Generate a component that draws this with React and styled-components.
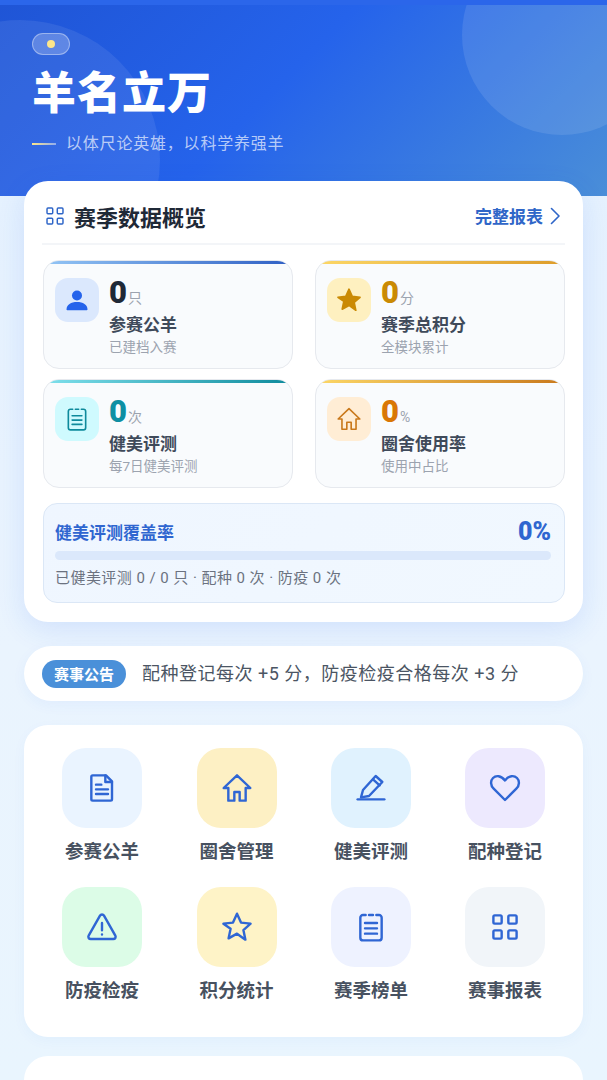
import React from "react"
import styled, { createGlobalStyle } from "styled-components"

const GlobalStyle = createGlobalStyle`
  html, body {
    margin: 0;
    padding: 0;
    height: 100%;
    overflow: hidden;
    background: #e9f4fe;
    font-family: "Roboto", "Noto Sans CJK SC", "Noto Sans", sans-serif;
  }
  * {
    box-sizing: border-box;
  }
`

const Page = styled.div`
  width: 607px;
  height: 1080px;
  overflow: hidden;
  background: linear-gradient(180deg, #e3f0fe 0%, #eaf4fe 60%, #e9f5fe 100%);
`

const Hero = styled.header`
  position: relative;
  height: 196px;
  padding: 33px 32px 0;
  overflow: hidden;
  background: linear-gradient(135deg, #1f55d6 0%, #2563eb 45%, #4a8ed8 100%);
  border-top: 5px solid #2b66ea;
`

const HeroCircle = styled.div`
  position: absolute;
  border-radius: 50%;
  background: rgba(255, 255, 255, ${(p) => p.$alpha});
  width: ${(p) => p.$size}px;
  height: ${(p) => p.$size}px;
  left: ${(p) => p.$left}px;
  top: ${(p) => p.$top}px;
`

const Chip = styled.div`
  position: relative;
  width: 38px;
  height: 22px;
  margin-top: -5px;
  border-radius: 11px;
  border: 1px solid rgba(255, 255, 255, 0.38);
  background: rgba(255, 255, 255, 0.22);
  display: flex;
  align-items: center;
  justify-content: center;
`

const ChipDot = styled.span`
  width: 8px;
  height: 8px;
  border-radius: 50%;
  background: #fde68a;
`

const HeroTitle = styled.h1`
  position: relative;
  margin: 11px 0 0;
  font-size: 44px;
  line-height: 56px;
  font-weight: 900;
  letter-spacing: 1px;
  color: #fff;
`

const HeroSub = styled.div`
  position: relative;
  margin-top: 10px;
  display: flex;
  align-items: center;
  gap: 10px;
  font-size: 16px;
  line-height: 24px;
  letter-spacing: 0.8px;
  color: rgba(255, 255, 255, 0.68);
`

const SubLine = styled.span`
  width: 24px;
  height: 2px;
  background: linear-gradient(90deg, #fde68a, rgba(255, 255, 255, 0.45));
`

const Content = styled.main`
  position: relative;
  margin-top: -15px;
  padding: 0 24px;
  display: flex;
  flex-direction: column;
`

const OverviewCard = styled.section`
  height: 441px;
  padding: 0 18px;
  background: #fff;
  border-radius: 24px;
  box-shadow: 0 8px 28px rgba(37, 99, 235, 0.12);
`

const CardHead = styled.div`
  height: 64px;
  padding: 7px 5px 0 0;
  display: flex;
  align-items: center;
  justify-content: space-between;
  border-bottom: 2px solid #f3f5f8;
`

const HeadTitle = styled.h2`
  margin: 0;
  display: flex;
  align-items: center;
  gap: 8px;
  padding-left: 2px;
  font-size: 22px;
  font-weight: 700;
  color: #1f2937;
`

const HeadLink = styled.div`
  display: flex;
  align-items: center;
  gap: 7px;
  font-size: 17px;
  font-weight: 700;
  color: #2f66c8;
`

const StatGrid = styled.div`
  margin: 15px 0 0 1px;
  display: grid;
  grid-template-columns: 250px 250px;
  column-gap: 22px;
  row-gap: 10px;
`

const StatCard = styled.div`
  height: 109px;
  border: 1px solid #e6e9ee;
  border-radius: 16px;
  background: #f9fbfd;
  overflow: hidden;
`

const StatBar = styled.div`
  height: 4px;
  margin: -1px 0 0;
  background: linear-gradient(90deg, ${(p) => p.$from}, ${(p) => p.$to});
`

const StatBody = styled.div`
  padding: 14px 11px 0;
  display: flex;
  gap: 10px;
`

const StatIcon = styled.div`
  width: 44px;
  height: 44px;
  flex: none;
  border-radius: 13px;
  display: flex;
  align-items: center;
  justify-content: center;
  background: ${(p) => p.$bg};
`

const StatInfo = styled.div`
  display: flex;
  flex-direction: column;
`

const StatValueRow = styled.div`
  display: flex;
  align-items: baseline;
  gap: 1px;
  height: 32px;
  margin-top: -1px;
`

const StatValue = styled.span`
  font-size: 31px;
  line-height: 32px;
  font-weight: 900;
  color: ${(p) => p.$color};
`

const StatUnit = styled.span`
  font-size: 14px;
  color: #9ca3af;
`

const StatLabel = styled.div`
  margin-top: 4px;
  font-size: 17px;
  line-height: 24px;
  font-weight: 700;
  color: #3f4a5a;
`

const StatHint = styled.div`
  margin-top: 1px;
  font-size: 13.5px;
  line-height: 18px;
  color: #9ca3af;
`

const Coverage = styled.div`
  margin: 15px 0 0 1px;
  height: 100px;
  padding: 11px 13px 0 11px;
  border: 1px solid #dbe7f6;
  border-radius: 14px;
  background: linear-gradient(135deg, #eff6ff, #f1f8ff);
`

const CoverageHead = styled.div`
  display: flex;
  align-items: center;
  justify-content: space-between;
  height: 32px;
`

const CoverageTitle = styled.span`
  font-size: 17px;
  font-weight: 700;
  color: #2f66d0;
`

const CoveragePct = styled.span`
  font-size: 25px;
  font-weight: 900;
  color: #2f66d0;
`

const Track = styled.div`
  margin-top: 4px;
  height: 9px;
  border-radius: 5px;
  background: #dbe8fb;
`

const CoverageNote = styled.div`
  margin-top: 8px;
  font-size: 15px;
  line-height: 20px;
  letter-spacing: 0.45px;
  color: #6b7280;
`

const Notice = styled.div`
  margin-top: 24px;
  height: 55px;
  padding: 0 18px;
  border-radius: 28px;
  background: #fff;
  display: flex;
  align-items: center;
  gap: 16px;
  box-shadow: 0 4px 14px rgba(37, 99, 235, 0.05);
`

const NoticeTag = styled.span`
  width: 84px;
  height: 28px;
  border-radius: 14px;
  background: #4a90d9;
  color: #fff;
  font-size: 15px;
  font-weight: 700;
  display: flex;
  align-items: center;
  justify-content: center;
`

const NoticeText = styled.span`
  padding-bottom: 3px;
  font-size: 18px;
  letter-spacing: 0.5px;
  color: #4b5563;
`

const MenuCard = styled.nav`
  margin-top: 24px;
  height: 312px;
  padding: 23px 11px 0;
  border-radius: 24px;
  background: #fff;
  display: grid;
  grid-template-columns: 134px 135px 134px 134px;
  grid-auto-rows: 139px;
  box-shadow: 0 4px 14px rgba(37, 99, 235, 0.04);
`

const MenuItem = styled.div`
  display: flex;
  flex-direction: column;
  align-items: center;
`

const MenuTile = styled.div`
  width: 80px;
  height: 80px;
  border-radius: 24px;
  display: flex;
  align-items: center;
  justify-content: center;
  background: ${(p) => p.$bg};
`

const MenuLabel = styled.div`
  margin-top: 11px;
  font-size: 18.5px;
  line-height: 26px;
  font-weight: 600;
  color: #475160;
`

const NextCard = styled.section`
  margin-top: 19px;
  height: 200px;
  border-radius: 24px;
  background: #fff;
`

const Svg = ({ size = 32, color = "#2f66d4", width = 1.8, children }) => (
  <svg
    width={size}
    height={size}
    viewBox="0 0 24 24"
    fill="none"
    stroke={color}
    strokeWidth={width}
    strokeLinecap="round"
    strokeLinejoin="round"
  >
    {children}
  </svg>
)

const DocIcon = (p) => (
  <Svg {...p}>
    <path d="M5 2.5h10l4.5 4.5v13.5a1 1 0 0 1-1 1H5a1 1 0 0 1-1-1v-17a1 1 0 0 1 1-1z" />
    <path d="M14.5 2.5V7.5h5" />
    <path d="M7.5 9.5h4M7.5 13h9M7.5 16.5h9" />
  </Svg>
)

const HomeIcon = (p) => (
  <Svg {...p}>
    <path d="M12 2.5 22 12h-3.500v9.500h-4.500V15h-4v6.500H5.500V12H2z" />
  </Svg>
)

const PenIcon = (p) => (
  <Svg {...p}>
    <path d="M4.500 19 6 13.500 15.500 3l5 4.500L10.500 18z" />
    <path d="M13.500 5.500l5 4.500" />
    <path d="M2 20.500h20" />
  </Svg>
)

const HeartIcon = (p) => (
  <Svg {...p}>
    <path d="M12 21 3.500 12.500C1 10 1 6.500 3 4.500c2.200-2.200 6-2 9 1.800 3-3.800 6.800-4 9-1.800 2 2 2 5.500-.5 8z" />
  </Svg>
)

const AlertIcon = (p) => (
  <Svg {...p}>
    <path d="M10.500 3.500 2 18.500c-.7 1.300.2 2.500 1.500 2.500h17c1.300 0 2.200-1.200 1.500-2.500l-8.500-15c-.7-1.200-2.300-1.200-3 0z" />
    <path d="M12 9v5.500M12 17.500v.1" />
  </Svg>
)

const StarIcon = (p) => (
  <Svg {...p}>
    <path d="M12 2l3 6.700 7.200.8-5.400 4.800 1.500 7.200L12 17l-6.300 3.500 1.500-7.200L1.800 9.500 9 8.700z" />
  </Svg>
)

const ListIcon = (p) => (
  <Svg {...p}>
    <path d="M8 3H6a2 2 0 0 0-2 2v15a2 2 0 0 0 2 2h12a2 2 0 0 0 2-2V5a2 2 0 0 0-2-2h-2" />
    <path d="M10.500 3h3" />
    <path d="M7.500 9h9M7.500 13h9M7.500 17h9" />
  </Svg>
)

const GridIcon = (p) => (
  <Svg {...p}>
    <rect x="3.300" y="3.300" width="6.200" height="6.200" rx="1" />
    <rect x="14.500" y="3.300" width="6.200" height="6.200" rx="1" />
    <rect x="3.300" y="14.500" width="6.200" height="6.200" rx="1" />
    <rect x="14.500" y="14.500" width="6.200" height="6.200" rx="1" />
  </Svg>
)

const ChevronIcon = () => (
  <svg width="10" height="18" viewBox="0 0 10 18" fill="none" stroke="#2f66c8" strokeWidth="1.600" strokeLinecap="round" strokeLinejoin="round">
    <path d="M1.500 1.500 9 9l-7.500 7.500" />
  </svg>
)

const PersonIcon = () => (
  <svg width="24" height="24" viewBox="0 0 24 24" fill="#2563eb">
    <circle cx="12" cy="7.500" r="5" />
    <path d="M1.500 21.500c0-5 4.500-7.500 10.500-7.500s10.500 2.500 10.500 7.500c0 .5-.3.8-.8.8H2.300c-.5 0-.8-.3-.8-.8z" />
  </svg>
)

const SolidStar = () => (
  <svg width="26" height="26" viewBox="0 0 24 24" fill="#ca8a04" stroke="#ca8a04" strokeWidth="1.500" strokeLinejoin="round">
    <path d="M12 2l3 6.700 7.200.8-5.400 4.800 1.500 7.200L12 17l-6.300 3.500 1.500-7.200L1.800 9.500 9 8.700z" />
  </svg>
)

const stats = [
  {
    value: "0", unit: "只", label: "参赛公羊", hint: "已建档入赛",
    from: "#93c5f5", to: "#2f5fc4", bg: "#dbe8fd", color: "#1f2937",
    icon: <PersonIcon />,
  },
  {
    value: "0", unit: "分", label: "赛季总积分", hint: "全模块累计",
    from: "#fcd767", to: "#dd9c2a", bg: "#fef0c0", color: "#ca8a04",
    icon: <SolidStar />,
  },
  {
    value: "0", unit: "次", label: "健美评测", hint: "每7日健美评测",
    from: "#7fe0ec", to: "#0e8a9c", bg: "#cffafe", color: "#0e8fa3",
    icon: <ListIcon size={26} color="#0e8a9c" width={1.5} />,
  },
  {
    value: "0", unit: "%", label: "圈舍使用率", hint: "使用中占比",
    from: "#fcd767", to: "#c9791c", bg: "#ffedd5", color: "#d97706",
    icon: <HomeIcon size={26} color="#c9791c" width={1.5} />,
  },
]

const menu = [
  { label: "参赛公羊", bg: "#eaf4ff", Icon: DocIcon },
  { label: "圈舍管理", bg: "#fdf0c4", Icon: HomeIcon },
  { label: "健美评测", bg: "#e0f2fe", Icon: PenIcon },
  { label: "配种登记", bg: "#ede9fe", Icon: HeartIcon },
  { label: "防疫检疫", bg: "#dcfce7", Icon: AlertIcon },
  { label: "积分统计", bg: "#fef3c7", Icon: StarIcon },
  { label: "赛季榜单", bg: "#eef2ff", Icon: ListIcon },
  { label: "赛事报表", bg: "#f1f5f9", Icon: GridIcon },
]

export default function App() {
  return (
    <>
      <GlobalStyle />
      <Page>
        <Hero>
          <HeroCircle $size={280} $left={-120} $top={15} $alpha={0.08} />
          <HeroCircle $size={200} $left={462} $top={-70} $alpha={0.1} />
          <Chip>
            <ChipDot />
          </Chip>
          <HeroTitle>羊名立万</HeroTitle>
          <HeroSub>
            <SubLine />
            以体尺论英雄，以科学养强羊
          </HeroSub>
        </Hero>
        <Content>
          <OverviewCard>
            <CardHead>
              <HeadTitle>
                <GridIcon size={22} color="#2f66c8" width={1.6} />
                赛季数据概览
              </HeadTitle>
              <HeadLink>
                完整报表
                <ChevronIcon />
              </HeadLink>
            </CardHead>
            <StatGrid>
              {stats.map((s) => (
                <StatCard key={s.label}>
                  <StatBar $from={s.from} $to={s.to} />
                  <StatBody>
                    <StatIcon $bg={s.bg}>{s.icon}</StatIcon>
                    <StatInfo>
                      <StatValueRow>
                        <StatValue $color={s.color}>{s.value}</StatValue>
                        <StatUnit>{s.unit}</StatUnit>
                      </StatValueRow>
                      <StatLabel>{s.label}</StatLabel>
                      <StatHint>{s.hint}</StatHint>
                    </StatInfo>
                  </StatBody>
                </StatCard>
              ))}
            </StatGrid>
            <Coverage>
              <CoverageHead>
                <CoverageTitle>健美评测覆盖率</CoverageTitle>
                <CoveragePct>0%</CoveragePct>
              </CoverageHead>
              <Track />
              <CoverageNote>已健美评测 0 / 0 只 · 配种 0 次 · 防疫 0 次</CoverageNote>
            </Coverage>
          </OverviewCard>
          <Notice>
            <NoticeTag>赛事公告</NoticeTag>
            <NoticeText>配种登记每次 +5 分，防疫检疫合格每次 +3 分</NoticeText>
          </Notice>
          <MenuCard>
            {menu.map(({ label, bg, Icon }) => (
              <MenuItem key={label}>
                <MenuTile $bg={bg}>
                  <Icon />
                </MenuTile>
                <MenuLabel>{label}</MenuLabel>
              </MenuItem>
            ))}
          </MenuCard>
          <NextCard />
        </Content>
      </Page>
    </>
  )
}
